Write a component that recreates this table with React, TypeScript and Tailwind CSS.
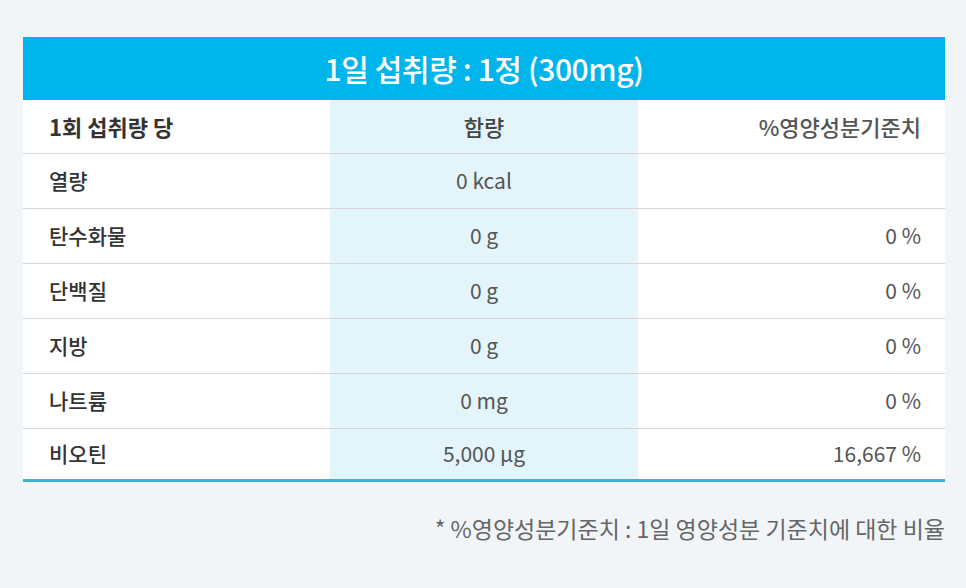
export default function App() {
  const rows = [
    { name: "열량", amount: "0 kcal", daily: "" },
    { name: "탄수화물", amount: "0 g", daily: "0 %" },
    { name: "단백질", amount: "0 g", daily: "0 %" },
    { name: "지방", amount: "0 g", daily: "0 %" },
    { name: "나트륨", amount: "0 mg", daily: "0 %" },
    { name: "비오틴", amount: "5,000 µg", daily: "16,667 %" },
  ];

  return (
    <div
      className="min-h-[588px] w-[966px] bg-[#f1f5f8] pt-[37px] pl-[23px]"
      style={{ fontFamily: '"Noto Sans CJK KR", "Noto Sans", sans-serif' }}
    >
      <div className="w-[922px]">
        <div className="flex h-[63px] items-center justify-center bg-[#00b5ec] text-[30px] font-medium tracking-[-0.4px] text-white">
          1일 섭취량 : 1정 (300mg)
        </div>

        <div className="grid grid-cols-[307px_308px_307px] bg-white text-[21px]">
          <div className="flex h-[54px] items-center border-b border-[#d6d6d6] pl-[26px] text-[22px] font-bold text-[#333]">
            1회 섭취량 당
          </div>
          <div className="flex h-[54px] items-center justify-center border-b border-[#d6d6d6] bg-[#e3f4fb] text-[22px] font-medium text-[#444]">
            함량
          </div>
          <div className="flex h-[54px] items-center justify-end border-b border-[#d6d6d6] pr-[24px] text-[22px] font-medium text-[#555]">
            %영양성분기준치
          </div>

          {rows.map((r, i) => {
            const last = i === rows.length - 1;
            const b = last
              ? "h-[53px] border-b-[3px] border-[#3db3d2]"
              : "h-[55px] border-b border-[#d6d6d6]";
            return (
              <div key={r.name} className="contents">
                <div className={`flex items-center pl-[26px] font-medium text-[#333] ${b}`}>
                  {r.name}
                </div>
                <div className={`flex items-center justify-center bg-[#e3f4fb] text-[#555] ${b}`}>
                  {r.amount}
                </div>
                <div className={`flex items-center justify-end pr-[24px] text-[#555] ${b}`}>
                  {r.daily}
                </div>
              </div>
            );
          })}
        </div>

        <p className="mt-[29px] text-right text-[23px] text-[#666]">
          * %영양성분기준치 : 1일 영양성분 기준치에 대한 비율
        </p>
      </div>
    </div>
  );
}
